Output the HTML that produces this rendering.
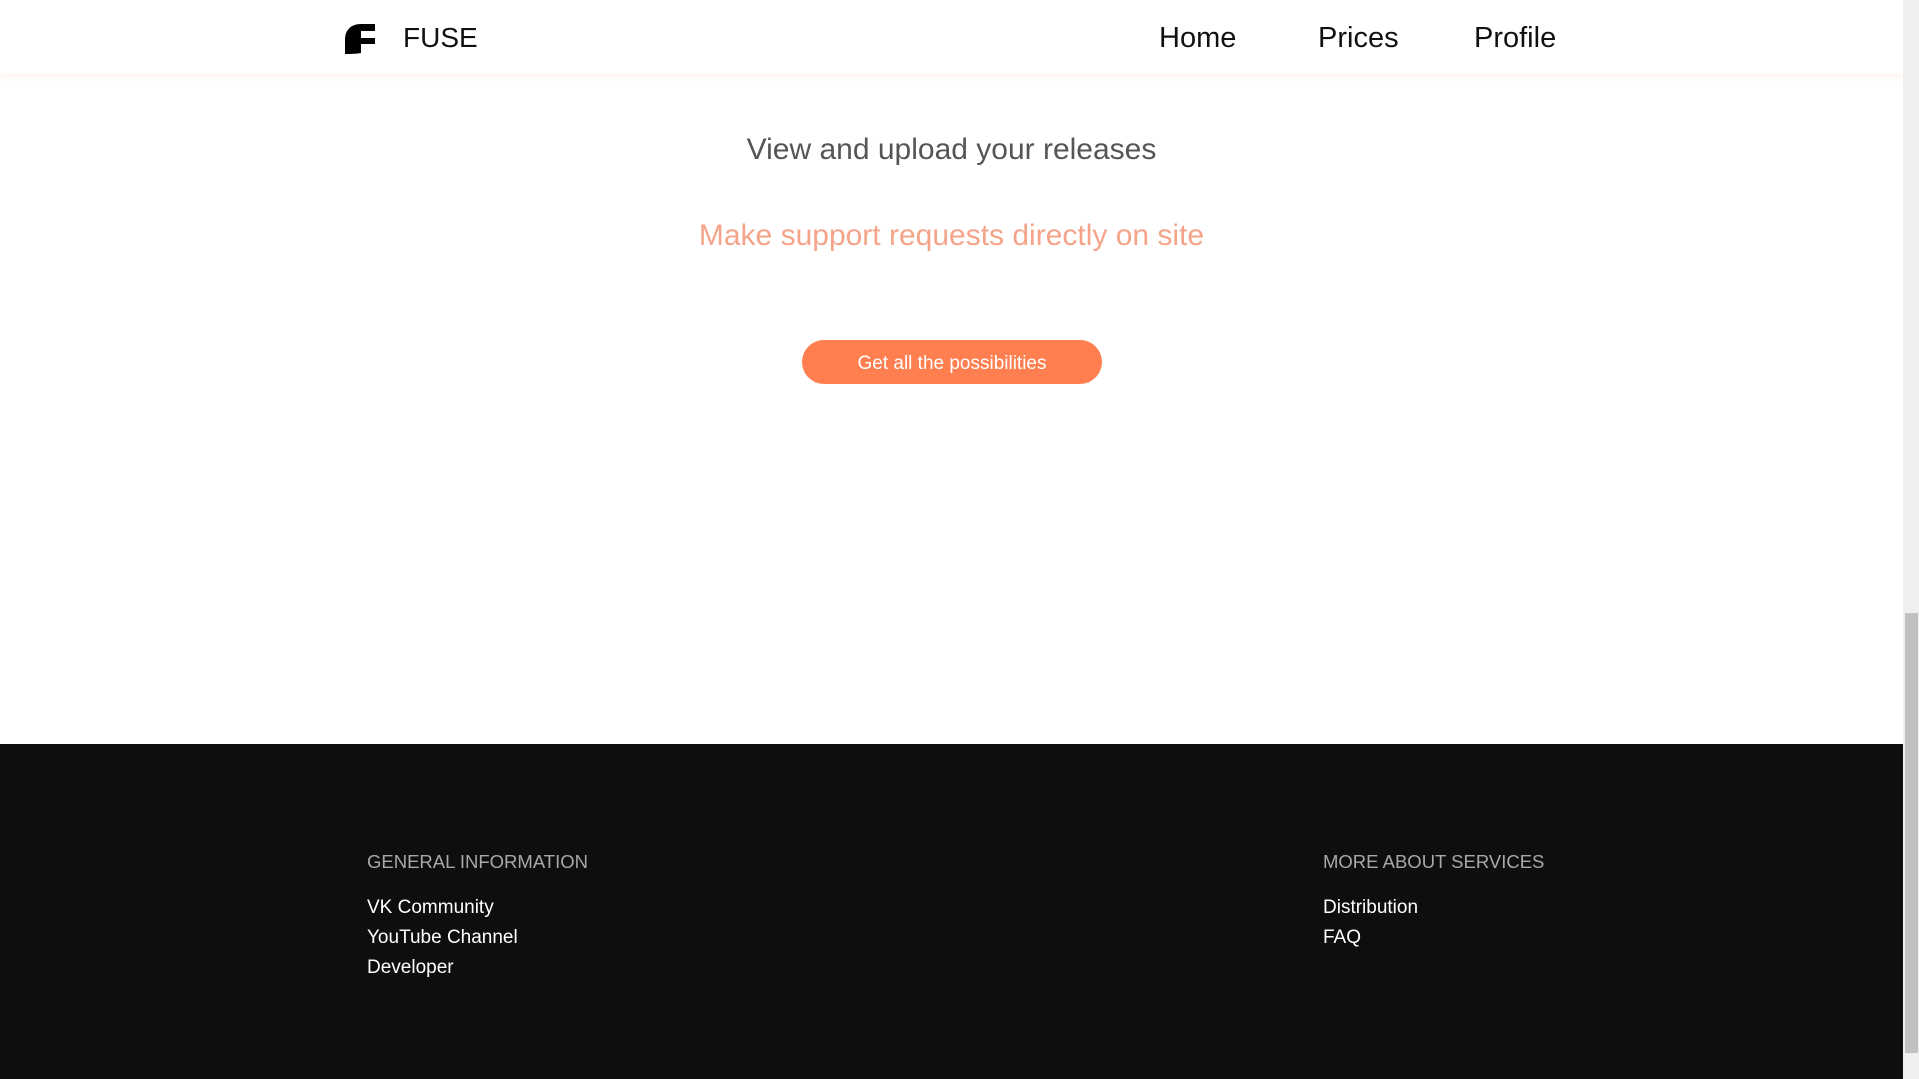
<!DOCTYPE html>
<html><head><meta charset="utf-8"><style>
*{margin:0;padding:0;box-sizing:border-box}
body{width:1919px;height:1079px;overflow:hidden;font-family:"Liberation Sans",sans-serif;background:#fff;position:relative}
.abs{position:absolute;white-space:nowrap}
header{position:absolute;left:0;top:0;width:1903px;height:74px;background:#fff;box-shadow:0 2px 6px rgba(255,200,180,.25)}
.nav{font-size:29px;color:#111;top:22px}
.c{left:0;width:1903px;text-align:center}
footer{position:absolute;left:0;top:744px;width:1903px;height:335px;background:#0e0e0e}
.h{font-size:18.5px;color:#a8a8a8;top:107px}
.l{font-size:19px;color:#fff}
.sb{position:absolute;left:1903px;top:0;width:16px;height:1079px;background:#f0f0f0}
.th{position:absolute;left:1905px;top:613px;width:13px;height:440px;background:#c1c1c1}
</style></head><body>
<header>
<svg class="abs" style="left:345px;top:23px" width="31" height="31" viewBox="0 0 31 31"><path d="M0 31 L0 17 C0 7 6 1 16 1 L30 1 L30 8 L16 8 L16 15 L30 15 L30 21 L16 21 L16 30 C10 31 4 31 0 31 Z" fill="#000"/></svg>
<div class="abs nav" style="left:403px;font-size:28px">FUSE</div>
<div class="abs nav" style="left:1159px">Home</div>
<div class="abs nav" style="left:1318px">Prices</div>
<div class="abs nav" style="left:1474px">Profile</div>
</header>
<div class="abs c" style="top:133px;font-size:30px;color:#555">View and upload your releases</div>
<div class="abs c" style="top:219px;font-size:30px;color:#f5a48a">Make support requests directly on site</div>
<div class="abs" style="left:802px;top:340px;width:300px;height:44px;border-radius:22px;background:#ff7f50;color:#fff;font-size:19px;text-align:center;line-height:47px">Get all the possibilities</div>
<footer>
<div class="abs h" style="left:367px">GENERAL INFORMATION</div>
<div class="abs l" style="left:367px;top:153px">VK Community</div>
<div class="abs l" style="left:367px;top:183px">YouTube Channel</div>
<div class="abs l" style="left:367px;top:213px">Developer</div>
<div class="abs h" style="left:1323px">MORE ABOUT SERVICES</div>
<div class="abs l" style="left:1323px;top:153px">Distribution</div>
<div class="abs l" style="left:1323px;top:183px">FAQ</div>
</footer>
<div class="sb"></div><div class="th"></div>
</body></html>
